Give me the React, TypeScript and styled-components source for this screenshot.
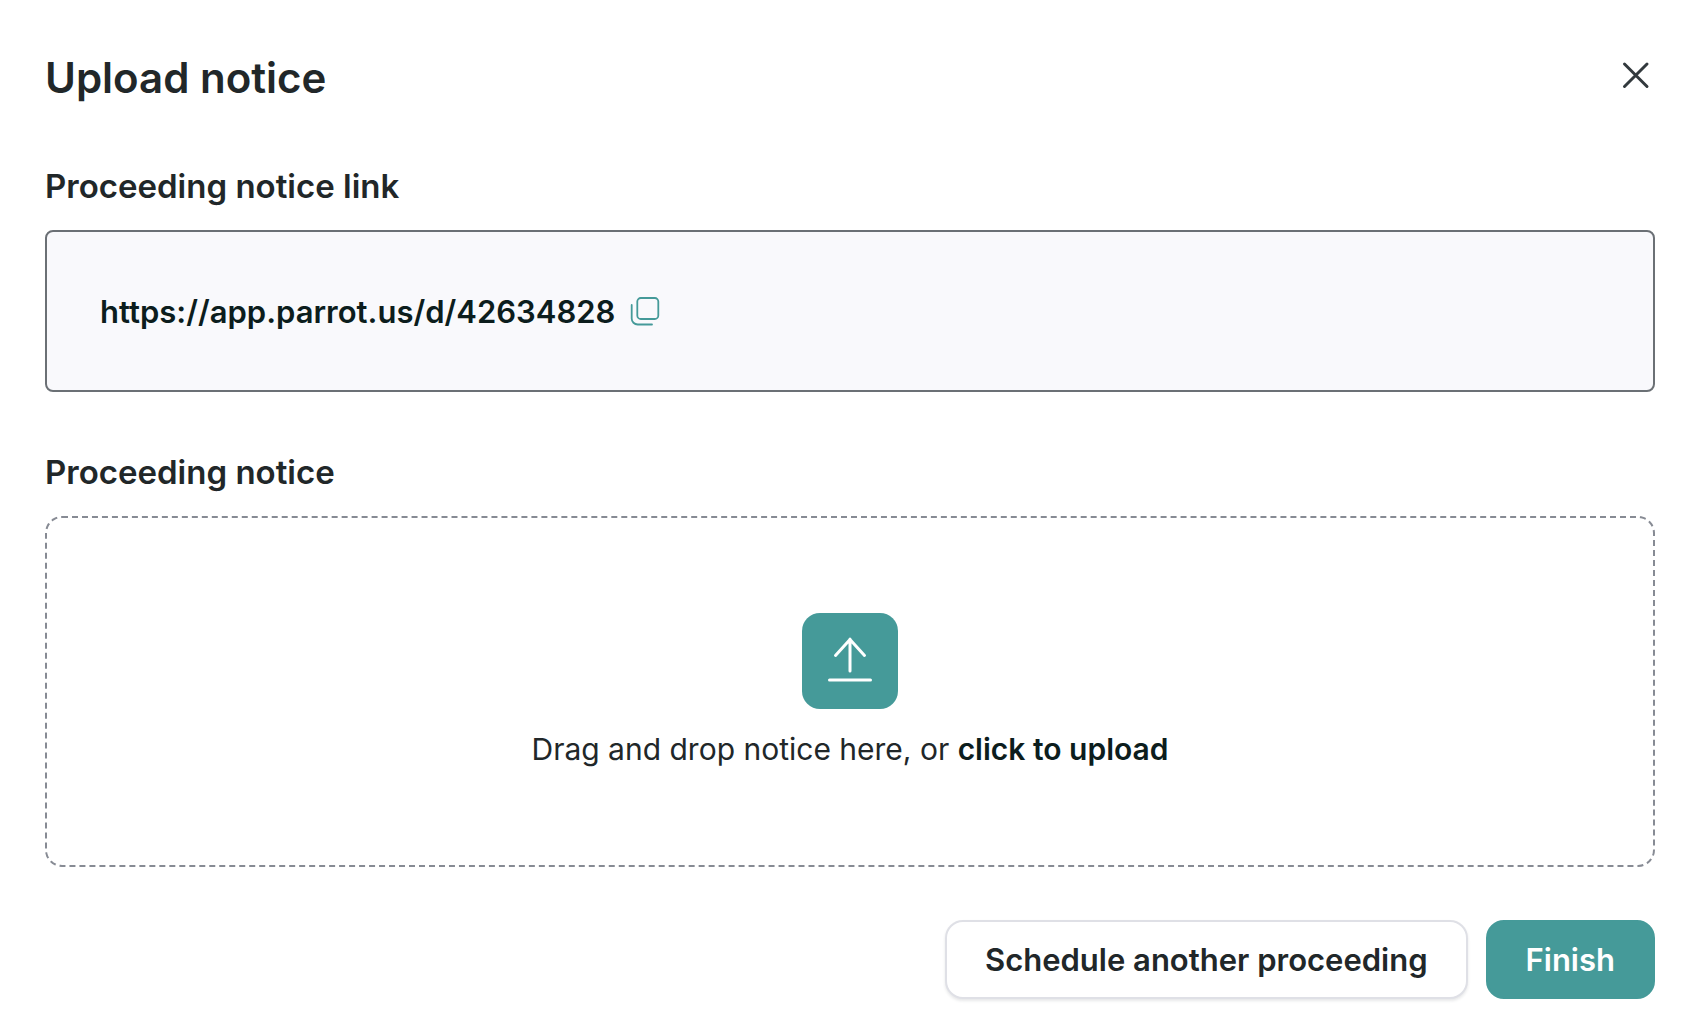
import React, { useRef } from "react";
import styled, { createGlobalStyle, css } from "styled-components";

const GlobalStyle = createGlobalStyle`
  *, *::before, *::after { box-sizing: border-box; }
  body {
    margin: 0;
    background: #fff;
    color: #212729;
    font-family: Inter, "Liberation Sans", sans-serif;
    -webkit-font-smoothing: antialiased;
  }
`;

const Dialog = styled.main`
  display: flex;
  flex-direction: column;
  padding: 48px 37px 33px 45px;
`;

const Header = styled.header`
  display: flex;
  align-items: flex-start;
  justify-content: space-between;
  margin-bottom: 56px;
`;

const Title = styled.h1`
  margin: 0;
  font-size: 42px;
  font-weight: 600;
  line-height: 60px;
`;

const CloseButton = styled.button`
  display: flex;
  padding: 12px 4px;
  border: 0;
  background: none;
  color: #32393d;
  cursor: pointer;
`;

const Section = styled.section`
  display: flex;
  flex-direction: column;
  gap: 22px;

  & + & {
    margin-top: 58px;
  }
`;

const SectionTitle = styled.h2`
  margin: 0;
  font-size: 33px;
  font-weight: 600;
  line-height: 44px;
`;

const LinkBox = styled.div`
  display: flex;
  align-items: center;
  gap: 13px;
  padding: 60px 53px 58px;
  border: 2px solid #6b7075;
  border-radius: 8px;
  background: #f9f9fc;
`;

const NoticeLink = styled.a`
  color: #0c1d1d;
  font-size: 31px;
  font-weight: 600;
  line-height: 40px;
  text-decoration: none;
`;

const CopyButton = styled.button`
  display: flex;
  padding: 0;
  border: 0;
  background: none;
  color: #459a99;
  cursor: pointer;
`;

const DropZone = styled.div`
  display: flex;
  flex-direction: column;
  align-items: center;
  gap: 20px;
  padding: 95px 24px 96px;
  border: 2px dashed #878b94;
  border-radius: 17px;
`;

const UploadTile = styled.div`
  display: flex;
  width: 96px;
  height: 96px;
  border-radius: 18px;
  background: #459a99;
  color: #fff;
`;

const Prompt = styled.p`
  margin: 0;
  font-size: 30px;
  line-height: 40px;
`;

const UploadButton = styled.button`
  padding: 0;
  border: 0;
  background: none;
  color: #0c1d1d;
  font: inherit;
  font-weight: 600;
  cursor: pointer;
`;

const Footer = styled.footer`
  display: flex;
  justify-content: flex-end;
  gap: 18px;
  margin-top: 53px;
`;

const Button = styled.button<{ $primary?: boolean }>`
  height: 79px;
  padding: 0 38px;
  border: 2px solid #dfe0e6;
  border-radius: 18px;
  background: #fff;
  color: #212729;
  font: 600 31px/40px Inter, "Liberation Sans", sans-serif;
  box-shadow: 0 2px 3px rgba(20, 25, 40, 0.1);
  cursor: pointer;
  ${(p) =>
    p.$primary &&
    css`
      border-color: #459a99;
      background: #459a99;
      color: #fff;
      box-shadow: none;
    `}
`;

const LINK = "https://app.parrot.us/d/42634828";

export default function App() {
  const fileInput = useRef<HTMLInputElement>(null);
  return (
    <Dialog>
      <GlobalStyle />
      <Header>
        <Title>Upload notice</Title>
        <CloseButton type="button" aria-label="Close">
          <svg width="30" height="30" viewBox="0 0 30 30" fill="none" stroke="currentColor" strokeWidth="3" strokeLinecap="round">
            <path d="M3.500 4 26 26.500M26 4 3.500 26.500" />
          </svg>
        </CloseButton>
      </Header>
      <Section>
        <SectionTitle>Proceeding notice link</SectionTitle>
        <LinkBox>
          <NoticeLink href={LINK}>{LINK}</NoticeLink>
          <CopyButton type="button" aria-label="Copy link">
            <svg width="36" height="36" viewBox="0 0 36 36" fill="none" stroke="currentColor" strokeWidth="1.800" strokeLinecap="round">
              <rect x="9.300" y="4" width="21" height="21" rx="3.500" />
              <path d="M3.700 11V24.500a6 6 0 0 0 6 6H24" />
            </svg>
          </CopyButton>
        </LinkBox>
      </Section>
      <Section>
        <SectionTitle>Proceeding notice</SectionTitle>
        <DropZone>
          <UploadTile>
            <svg width="96" height="96" viewBox="0 0 96 96" fill="none" stroke="currentColor" strokeWidth="3" strokeLinecap="round" strokeLinejoin="round">
              <path d="M48 58V26M33.500 42.500 48 26.500 62.500 42.500M27.500 67H68.500" />
            </svg>
          </UploadTile>
          <Prompt>
            Drag and drop notice here, or{" "}
            <UploadButton type="button" onClick={() => fileInput.current?.click()}>
              click to upload
            </UploadButton>
          </Prompt>
          <input ref={fileInput} type="file" hidden aria-label="Proceeding notice" />
        </DropZone>
      </Section>
      <Footer>
        <Button type="button">Schedule another proceeding</Button>
        <Button type="button" $primary>Finish</Button>
      </Footer>
    </Dialog>
  );
}
